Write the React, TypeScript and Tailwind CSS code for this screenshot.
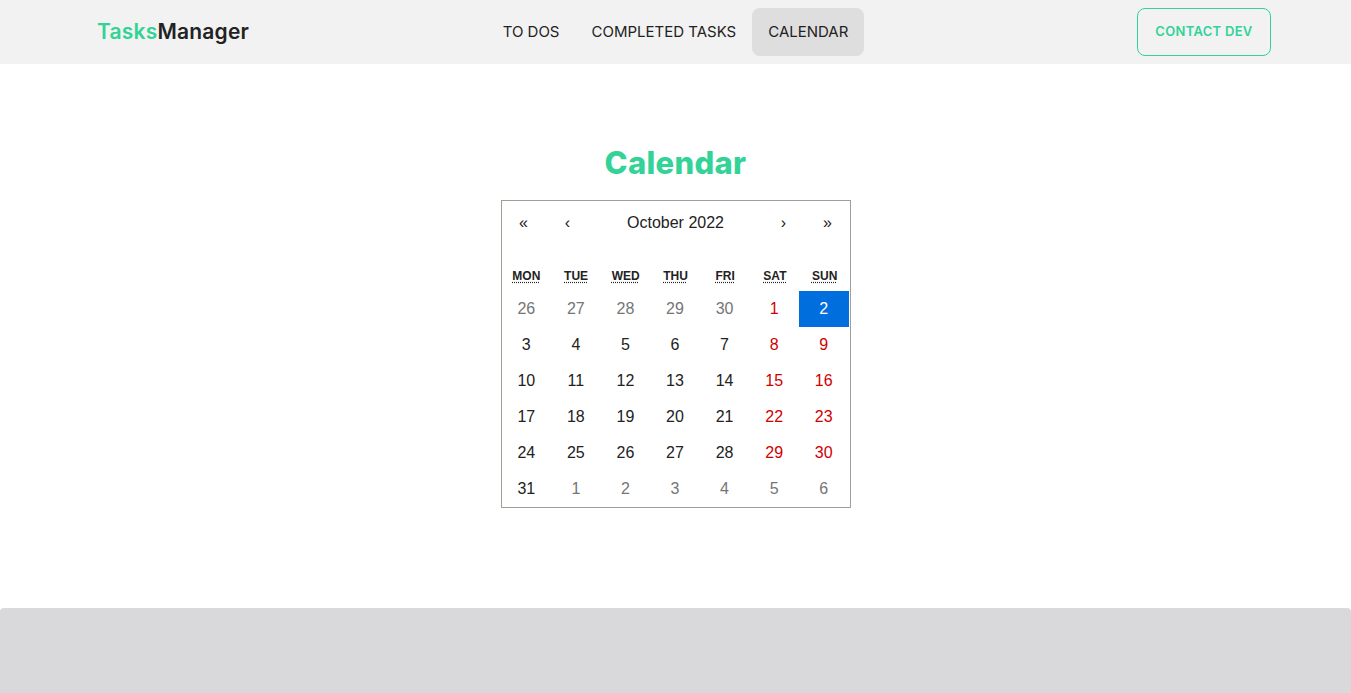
const days: { d: number; kind: 'n' | 'w' | 'o' | 'a' }[] = [
  { d: 26, kind: 'o' }, { d: 27, kind: 'o' }, { d: 28, kind: 'o' }, { d: 29, kind: 'o' }, { d: 30, kind: 'o' }, { d: 1, kind: 'w' }, { d: 2, kind: 'a' },
  ...[3, 4, 5, 6, 7].map((d) => ({ d, kind: 'n' as const })), { d: 8, kind: 'w' }, { d: 9, kind: 'w' },
  ...[10, 11, 12, 13, 14].map((d) => ({ d, kind: 'n' as const })), { d: 15, kind: 'w' }, { d: 16, kind: 'w' },
  ...[17, 18, 19, 20, 21].map((d) => ({ d, kind: 'n' as const })), { d: 22, kind: 'w' }, { d: 23, kind: 'w' },
  ...[24, 25, 26, 27, 28].map((d) => ({ d, kind: 'n' as const })), { d: 29, kind: 'w' }, { d: 30, kind: 'w' },
  { d: 31, kind: 'n' }, ...[1, 2, 3, 4, 5, 6].map((d) => ({ d, kind: 'o' as const })),
];

const tileColor = {
  n: 'text-[#222]',
  w: 'text-[#d10000]',
  o: 'text-[#757575]',
  a: 'bg-[#006edc] text-white',
};

function Header() {
  return (
    <header className="h-16 shrink-0 bg-[#f2f2f2] grid grid-cols-[1fr_auto_1fr] items-center px-[80px] font-['Inter',sans-serif]">
      <div className="ml-[17px] text-[21px] font-semibold tracking-[0.2px] text-[#222]">
        <span className="text-[#33d398]">Tasks</span>Manager
      </div>
      <nav className="flex text-[15px] text-[#222]">
        <a className="h-12 px-4 flex items-center rounded-lg">TO DOS</a>
        <a className="h-12 px-4 flex items-center rounded-lg">COMPLETED TASKS</a>
        <a className="h-12 px-4 flex items-center rounded-lg bg-[#dedede]">CALENDAR</a>
      </nav>
      <div className="flex justify-end">
        <button className="h-12 w-[134px] rounded-lg border border-[#33d398] text-[#33d398] text-[13px] font-semibold tracking-[0.3px]">
          CONTACT DEV
        </button>
      </div>
    </header>
  );
}

function Calendar() {
  const navBtn = 'w-11 h-11 flex items-center justify-center';
  return (
    <div className="w-[350px] border border-[#a0a096] bg-white font-['Liberation_Sans',Arial,sans-serif] text-[#222]">
      <div className="flex h-11 text-[16px]">
        <button className={navBtn}>«</button>
        <button className={navBtn}>‹</button>
        <div className="flex-1 flex items-center justify-center">October 2022</div>
        <button className={navBtn}>›</button>
        <button className={navBtn}>»</button>
      </div>
      <div className="grid grid-cols-7 mt-4 h-[30px] items-center text-[12px] font-bold text-center">
        {['MON', 'TUE', 'WED', 'THU', 'FRI', 'SAT', 'SUN'].map((w) => (
          <abbr key={w} className="underline decoration-dotted underline-offset-2">
            {w}
          </abbr>
        ))}
      </div>
      <div className="grid grid-cols-7 text-[16px] pr-px">
        {days.map((t, i) => (
          <div key={i} className={`h-9 flex items-center justify-center ${tileColor[t.kind]}`}>
            {t.d}
          </div>
        ))}
      </div>
    </div>
  );
}

export default function App() {
  return (
    <div className="h-[693px] overflow-hidden bg-white flex flex-col">
      <Header />
      <main className="shrink-0 flex flex-col items-center pt-[76px]">
        <h1 className="h-[45px] leading-[45px] text-[31px] font-extrabold text-[#33d398] font-['Inter',sans-serif] tracking-[0.3px]">
          Calendar
        </h1>
        <div className="mt-[15px]">
          <Calendar />
        </div>
      </main>
      <footer className="mt-[100px] h-[120px] shrink-0 bg-[#d9d9dc] rounded-t-[4px] pt-[83px] flex justify-center text-[15px] text-[#222] font-['Inter',sans-serif]">
        <span className="w-[138px] whitespace-nowrap">| Made by dev</span>
        <span className="w-[59px] whitespace-nowrap">| GitHub</span>
      </footer>
    </div>
  );
}
